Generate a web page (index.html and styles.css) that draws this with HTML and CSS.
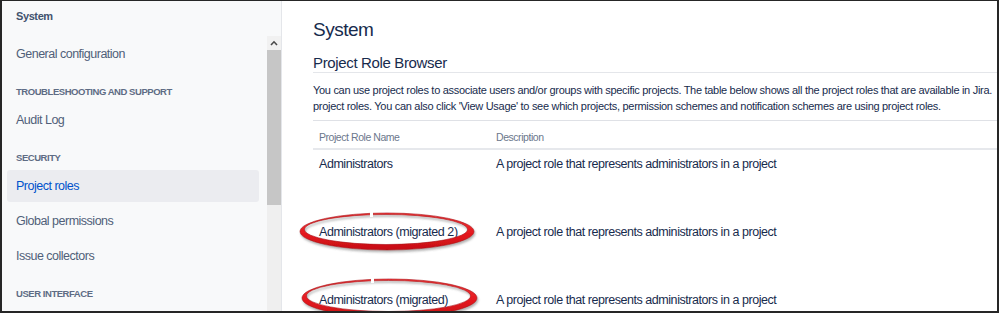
FILE: index.html
```html
<!DOCTYPE html>
<html lang="en">
<head>
<meta charset="utf-8">
<title>System - Project Role Browser</title>
<link rel="stylesheet" href="styles.css">
</head>
<body>
<div class="frame">
  <aside class="sidebar">
    <div class="side-title">System</div>
    <div class="side-scroll">
      <nav class="side-nav">
        <a class="nav-item">General configuration</a>
        <div class="nav-heading">Troubleshooting and support</div>
        <a class="nav-item">Audit Log</a>
        <div class="nav-heading">Security</div>
        <a class="nav-item active">Project roles</a>
        <a class="nav-item">Global permissions</a>
        <a class="nav-item">Issue collectors</a>
        <div class="nav-heading">User interface</div>
      </nav>
      <div class="scrollbar">
        <div class="sb-btn">
          <svg width="8" height="6" viewBox="0 0 8 6"><path d="M1 5 L4 1.8 L7 5" fill="none" stroke="#4a4a4a" stroke-width="1.6"/></svg>
        </div>
        <div class="sb-thumb"></div>
        <div class="sb-track"></div>
      </div>
    </div>
  </aside>
  <main class="content">
    <h1 class="page-title">System</h1>
    <h2 class="section-title">Project Role Browser</h2>
    <p class="intro">You can use project roles to associate users and/or groups with specific projects. The table below shows all the project roles that are available in Jira.<br>project roles. You can also click 'View Usage' to see which projects, permission schemes and notification schemes are using project roles.</p>
    <div class="roles-table">
      <div class="row head">
        <div class="cell name">Project Role Name</div>
        <div class="cell desc">Description</div>
      </div>
      <div class="row">
        <div class="cell name">Administrators</div>
        <div class="cell desc">A project role that represents administrators in a project</div>
      </div>
      <div class="row">
        <div class="cell name">Administrators (migrated 2)</div>
        <div class="cell desc">A project role that represents administrators in a project</div>
      </div>
      <div class="row">
        <div class="cell name">Administrators (migrated)</div>
        <div class="cell desc">A project role that represents administrators in a project</div>
      </div>
    </div>
    <svg class="annotations" width="230" height="330" viewBox="0 0 230 330">
      <defs>
        <filter id="shadow" x="-10%" y="-30%" width="120%" height="170%">
          <feDropShadow dx="1" dy="2" stdDeviation="1.2" flood-color="#555" flood-opacity="0.45"/>
        </filter>
        <linearGradient id="red" x1="0" y1="0" x2="0" y2="1">
          <stop offset="0" stop-color="#f03a3a"/>
          <stop offset="0.6" stop-color="#e3161d"/>
          <stop offset="1" stop-color="#c40f16"/>
        </linearGradient>
      </defs>
      <g filter="url(#shadow)" fill="url(#red)" stroke="#a8121a" stroke-width="0.6" fill-rule="evenodd">
        <path d="M18,230.5 a87,18.5 0 1,0 174,0 a87,18.5 0 1,0 -174,0 Z M22.5,228.5 a81.5,15 0 1,0 163,0 a81.5,15 0 1,0 -163,0 Z"/>
        <path d="M20,297 a87.5,19 0 1,0 175,0 a87.5,19 0 1,0 -175,0 Z M24.5,295 a82,15.5 0 1,0 164,0 a82,15.5 0 1,0 -164,0 Z"/>
      </g>
      <rect x="88" y="209" width="3" height="7" fill="#fff"/>
      <rect x="89" y="275" width="3" height="7" fill="#fff"/>
    </svg>
  </main>
</div>
</body>
</html>
```
FILE: styles.css
```css
* { box-sizing: border-box; }

html, body {
  margin: 0;
  padding: 0;
  background: #fff;
}

body {
  font-family: "Liberation Sans", Arial, sans-serif;
  color: #172b4d;
}

.frame {
  width: 999px;
  height: 313px;
  border-style: solid;
  border-color: #262626;
  border-width: 1px 2px 2px 2px;
  display: flex;
  overflow: hidden;
  background: #fff;
}

/* ---------- Sidebar ---------- */
.sidebar {
  width: 280px;
  flex: none;
  display: flex;
  flex-direction: column;
  background: #f8f9fa;
  border-right: 1px solid #e4e6ea;
}

.side-title {
  height: 35px;
  padding: 7px 0 0 14px;
  font-size: 11px;
  letter-spacing: -0.4px;
  line-height: 16px;
  font-weight: bold;
  color: #42526e;
}

.side-scroll {
  flex: 1;
  display: flex;
  min-height: 0;
}

.side-nav {
  flex: 1;
  display: flex;
  flex-direction: column;
  padding: 2px 8px 0 5px;
}

.nav-item {
  display: block;
  height: 32px;
  line-height: 32px;
  padding-left: 9px;
  font-size: 12.5px;
  letter-spacing: -0.5px;
  color: #505f79;
  border-radius: 3px;
}

.nav-item + .nav-item { margin-top: 3px; }

.nav-item.active {
  background: #ebecf0;
  color: #0052cc;
}

.nav-heading {
  margin: 14px 0 4px;
  height: 16px;
  line-height: 16px;
  padding-left: 9px;
  font-size: 9.5px;
  letter-spacing: -0.45px;
  font-weight: bold;
  text-transform: uppercase;
  color: #5e6c84;
}

.scrollbar {
  width: 14px;
  flex: none;
  display: flex;
  flex-direction: column;
  background: #f0f0f0;
}

.sb-btn {
  height: 14px;
  display: flex;
  align-items: center;
  justify-content: center;
  background: #f1f1f1;
}

.sb-thumb {
  height: 155px;
  background: #c6c6c6;
}

.sb-track {
  flex: 1;
  background: #efefef;
}

/* ---------- Main content ---------- */
.content {
  position: relative;
  flex: 1;
  padding: 15px 0 0 31px;
  overflow: hidden;
}

.page-title {
  margin: 0;
  font-size: 19px;
  letter-spacing: -0.5px;
  line-height: 28px;
  font-weight: normal;
  color: #172b4d;
}

.section-title {
  margin: 10px 0 0;
  font-size: 15px;
  letter-spacing: -0.35px;
  line-height: 18px;
  font-weight: normal;
  color: #172b4d;
  border-bottom: 1px solid #e4e6ea;
}

.intro {
  margin: 9px 0 0;
  padding-bottom: 6px;
  font-size: 11px;
  letter-spacing: -0.3px;
  line-height: 16px;
  white-space: nowrap;
  color: #172b4d;
  border-bottom: 1px solid #dfe1e6;
}

.roles-table {
  display: flex;
  flex-direction: column;
}

.row {
  display: flex;
  height: 68px;
}

.row .cell {
  padding: 5px 0 0 6px;
  font-size: 12.5px;
  letter-spacing: -0.45px;
  line-height: 18px;
  color: #172b4d;
  white-space: nowrap;
}

.row.head {
  height: auto;
  border-bottom: 2px solid #e6e8ec;
}

.row.head .cell {
  padding: 8px 0 3px 6px;
  font-size: 10.5px;
  letter-spacing: -0.45px;
  line-height: 16px;
  color: #6b778c;
}

.cell.name {
  width: 177px;
  flex: none;
}

.cell.desc {
  flex: 1;
}

.annotations {
  position: absolute;
  left: 0;
  top: 0;
  pointer-events: none;
}
```
